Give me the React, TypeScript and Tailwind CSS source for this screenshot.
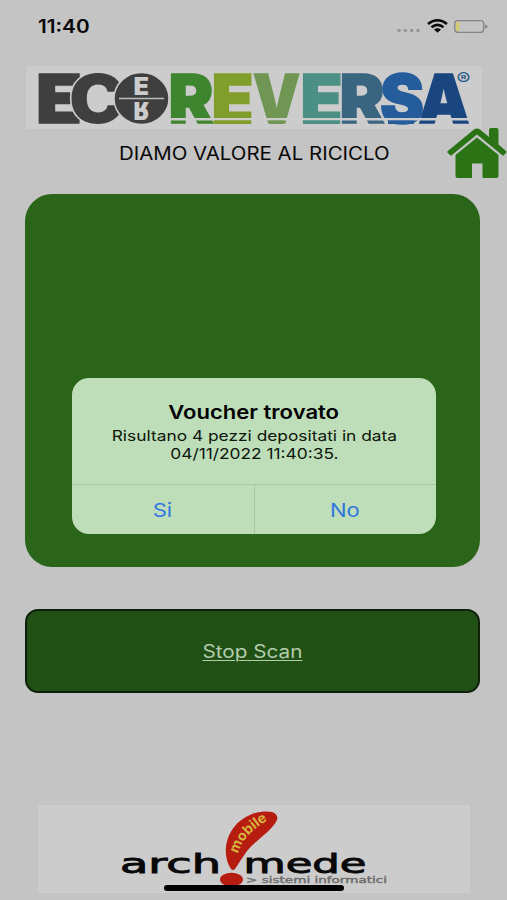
import type { ReactNode } from "react";

type Letter = { ch: string; x: number; w: number; fill: string };

const letters: Letter[] = [
  { ch: "E", x: 36, w: 46, fill: "#3f3f40" },
  { ch: "R", x: 168.5, w: 45, fill: "#3e8530" },
  { ch: "E", x: 211.5, w: 42, fill: "#809e2a" },
  { ch: "V", x: 253, w: 47, fill: "#6f9652" },
  { ch: "E", x: 300.5, w: 42, fill: "#4b8f85" },
  { ch: "R", x: 339.5, w: 45, fill: "#3a6580" },
  { ch: "S", x: 380, w: 44, fill: "#245c9c" },
  { ch: "A", x: 418.5, w: 51, fill: "#1a4680" },
];

function EcoLogo() {
  return (
    <svg
      viewBox="26 66 456 63"
      className="ml-[26px] block h-[63px] w-[456px] overflow-visible bg-[#cccccc] font-['Inter',sans-serif]"
    >
      {letters.map((l) => (
        <text
          key={l.x}
          x={l.x}
          y={123.3}
          fontSize={68}
          fontWeight={900}
          fill={l.fill}
          stroke={l.fill}
          strokeWidth={1.6}
          textLength={l.w}
          lengthAdjust="spacingAndGlyphs"
        >
          {l.ch}
        </text>
      ))}
      <text
        x={69}
        y={122.5}
        fontSize={67}
        fontWeight={900}
        fill="#3f3f40"
        stroke="#cccccc"
        strokeWidth={3}
        paintOrder="stroke"
        textLength={56}
        lengthAdjust="spacingAndGlyphs"
      >
        C
      </text>
      <ellipse cx="141.5" cy="98.500" rx="27.500" ry="26" fill="#3f3f40" stroke="#cccccc" strokeWidth="1.500" />
      <path d="M119 98.500H164" stroke="#bdbdbd" strokeWidth="1.500" />
      <g fill="#cccccc" fontSize="24" fontWeight={900}>
        <text x="133.500" y="94.500" textLength="15.500" lengthAdjust="spacingAndGlyphs">
          E
        </text>
        <text x="133.500" y="-102" transform="scale(1 -1)" textLength="15.500" lengthAdjust="spacingAndGlyphs">
          R
        </text>
      </g>
      <path d="M168 119.200H472" stroke="#cccccc" strokeWidth="2.400" />
      <path d="M213.500 122.300H251" stroke="#809e2a" strokeWidth="3.400" />
      <path d="M270 122.300H283" stroke="#6f9652" strokeWidth="3.400" />
      <path d="M303 122.300H339" stroke="#4b8f85" strokeWidth="3.400" />
      <path d="M388 122.300H414" stroke="#245c9c" strokeWidth="3.400" />
      <text x="456.500" y="84.500" fontSize="17" fontWeight={600} fill="#2d5c8c" textLength="14" lengthAdjust="spacingAndGlyphs">
        ®
      </text>
    </svg>
  );
}

function HomeIcon() {
  return (
    <svg viewBox="0 0 60 52" className="absolute top-[127px] left-[447px] h-[52px] w-[60px]" fill="#2a7415">
      <path d="M8.500 28 L30 10.500 51.500 28 V49 q0 2-2 2 H35.500 V36.500 H25 V51 H10.500 q-2 0-2-2Z" />
      <path d="M27 2.500 Q30 .5 33 2.500 L42 10 V3 q0-2 2-2 H49.500 q2 0 2 2 V17.500 L59 24 q1 1 0 2 L57 28 q-1 1-2 0 L30 7.500 5 28 q-1 1-2 0 L.8 26 q-1-1 0-2Z" />
    </svg>
  );
}

function StatusBar() {
  return (
    <header className="flex h-[66px] items-start justify-between pt-[17px] pr-[19px] pl-[38px]">
      <span className="origin-left scale-x-[1.15] text-[18px] leading-5 font-semibold">11:40</span>
      <svg viewBox="0 0 92 20" className="h-5 w-[92px]">
        <g fill="#969696">
          <circle cx="3" cy="13.500" r="1.800" />
          <circle cx="9.300" cy="13.500" r="1.800" />
          <circle cx="15.600" cy="13.500" r="1.800" />
          <circle cx="22" cy="13.500" r="1.800" />
        </g>
        <g fill="none" stroke="#080808" strokeWidth="2.600">
          <path d="M32 7Q41.500 -.5 51 7" />
          <path d="M35.500 10.200Q41.500 5.500 47.500 10.200" />
        </g>
        <path d="M38 12.500Q41.500 10 45 12.500L41.500 15.800Z" fill="#080808" />
        <rect x="58.700" y="3.700" width="29" height="11.600" rx="3" fill="none" stroke="#858585" strokeWidth="1.300" />
        <path d="M60 6.500q0-1.500 1.500-1.500h2v9h-2q-1.500 0-1.500-1.500Z" fill="#d5cc72" />
        <path d="M89 7.500Q91.500 8 91.500 9.500T89 11.500Z" fill="#858585" />
      </svg>
    </header>
  );
}

function DialogButton({ children }: { children: ReactNode }) {
  return (
    <button className="flex-1 pt-[3px] text-[19px] text-[#3276df]">
      <span className="inline-block scale-x-[1.16]">{children}</span>
    </button>
  );
}

function VoucherDialog() {
  return (
    <div
      role="dialog"
      className="mt-[184px] ml-[47px] flex h-[156px] w-[364px] flex-col overflow-hidden rounded-[17px] bg-[#bedeb9] text-center"
    >
      <div className="flex h-[106px] flex-col items-center pt-[23px] text-black">
        <h2 className="scale-x-[1.16] text-[19px] leading-6 font-semibold">Voucher trovato</h2>
        <p className="mt-[2px] scale-x-[1.195] text-[14.5px] leading-[18px] whitespace-nowrap text-[#0c160b]">
          Risultano 4 pezzi depositati in data
          <br />
          04/11/2022 11:40:35.
        </p>
      </div>
      <div className="flex flex-1 divide-x divide-[#a7c6a3] border-t border-[#a7c6a3]">
        <DialogButton>Si</DialogButton>
        <DialogButton>No</DialogButton>
      </div>
    </div>
  );
}

function ArchimedeLogo() {
  return (
    <svg viewBox="38 805 432 88" className="mt-[112px] ml-[38px] block h-[88px] w-[432px] overflow-visible bg-[#cccccc]">
      <g fill="#080808" stroke="#080808" strokeWidth=".9" fontSize="27" className="font-['DejaVu_Sans',sans-serif]">
        <text x="120" y="873" textLength="101" lengthAdjust="spacingAndGlyphs">
          arch
        </text>
        <text x="243.500" y="873" textLength="123" lengthAdjust="spacingAndGlyphs">
          mede
        </text>
      </g>
      <path
        d="M231 869C223 857 224 839 235 826C246 813 263 810 272 812Q280 815 276 822C270 832 256 840 247 851Q240 861 235 869Q233 871 231 869Z"
        fill="#b71c10"
      />
      <ellipse cx="231.500" cy="879.500" rx="11.500" ry="6.800" fill="#b71c10" />
      <path id="mobile-curve" d="M238 854Q243 834 270 819" fill="none" />
      <text fontSize="14" fontWeight={700} fill="#d6b63c" className="font-['Inter',sans-serif]">
        <textPath href="#mobile-curve" textLength="46" lengthAdjust="spacingAndGlyphs">
          mobile
        </textPath>
      </text>
      <text
        x="246"
        y="883"
        fontSize="8.500"
        fill="#6e6e6e"
        stroke="#6e6e6e"
        strokeWidth=".4"
        textLength="141"
        lengthAdjust="spacingAndGlyphs"
        className="font-['DejaVu_Sans',sans-serif]"
      >
        &gt; sistemi informatici
      </text>
    </svg>
  );
}

export default function App() {
  return (
    <div className="relative h-[900px] w-[507px] overflow-hidden bg-[#c4c4c4] font-['Inter',sans-serif] text-[#080808]">
      <StatusBar />
      <EcoLogo />
      <p className="mt-[13px] pl-px text-center text-[18px] leading-6">
        <span className="inline-block scale-x-[1.135]">DIAMO VALORE AL RICICLO</span>
      </p>
      <HomeIcon />

      <main className="mt-[28px] ml-[25px] flex h-[373px] w-[455px] items-start rounded-[27px] bg-[#2b6519]">
        <VoucherDialog />
      </main>

      <button className="mt-[42px] ml-[25px] block h-[84px] w-[455px] rounded-[13px] border-2 border-[#10200b] bg-[#205013] text-[18px] text-[#b4cbae]">
        <span className="inline-block scale-x-[1.15] underline decoration-1 underline-offset-2">Stop Scan</span>
      </button>

      <ArchimedeLogo />
      <div className="absolute top-[885px] left-[164px] h-[6px] w-[180px] rounded-full bg-black" />
    </div>
  );
}
